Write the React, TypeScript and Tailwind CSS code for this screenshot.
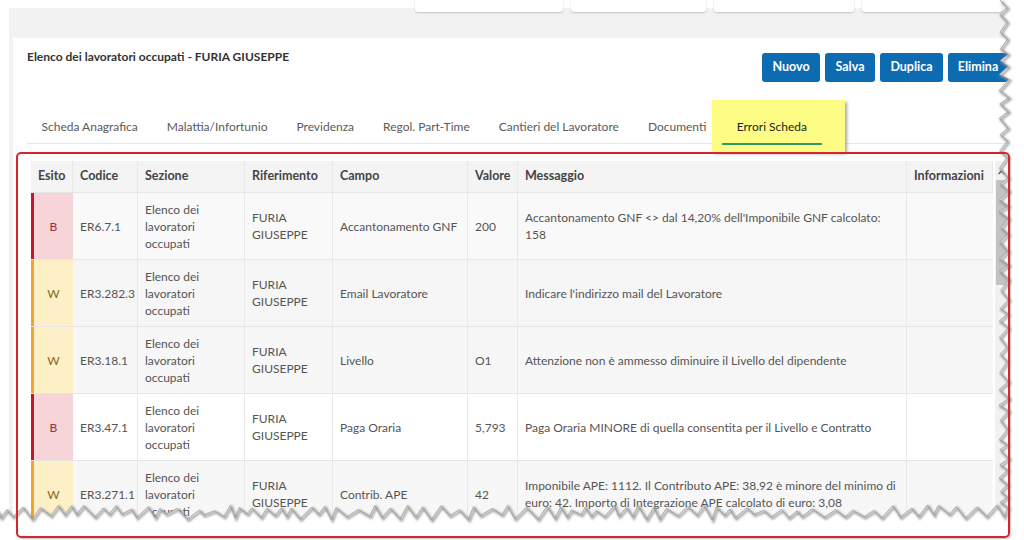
import React from "react";

type Row = {
    esito: "B" | "W";
    codice: string;
    campo: string;
    valore: string;
    messaggio: string;
    bg: string;
};

const rows: Row[] = [
    {
        esito: "B",
        codice: "ER6.7.1",
        campo: "Accantonamento GNF",
        valore: "200",
        messaggio: "Accantonamento GNF <> dal 14,20% dell'Imponibile GNF calcolato: 158",
        bg: "bg-[#f9f9f9]",
    },
    {
        esito: "W",
        codice: "ER3.282.3",
        campo: "Email Lavoratore",
        valore: "",
        messaggio: "Indicare l'indirizzo mail del Lavoratore",
        bg: "bg-[#f6f6f6]",
    },
    {
        esito: "W",
        codice: "ER3.18.1",
        campo: "Livello",
        valore: "O1",
        messaggio: "Attenzione non è ammesso diminuire il Livello del dipendente",
        bg: "bg-[#f7f7f7]",
    },
    {
        esito: "B",
        codice: "ER3.47.1",
        campo: "Paga Oraria",
        valore: "5,793",
        messaggio: "Paga Oraria MINORE di quella consentita per il Livello e Contratto",
        bg: "bg-white",
    },
    {
        esito: "W",
        codice: "ER3.271.1",
        campo: "Contrib. APE",
        valore: "42",
        messaggio:
            "Imponibile APE: 1112. Il Contributo APE: 38,92 è minore del minimo di euro: 42. Importo di Integrazione APE calcolato di euro: 3,08",
        bg: "bg-[#f7f7f7]",
    },
];

const tabs = [
    "Scheda Anagrafica",
    "Malattia/Infortunio",
    "Previdenza",
    "Regol. Part-Time",
    "Cantieri del Lavoratore",
    "Documenti",
];

const buttons = [
    { label: "Nuovo", w: "w-[58px]" },
    { label: "Salva", w: "w-[50px]" },
    { label: "Duplica", w: "w-[63px]" },
    { label: "Elimina", w: "w-[60px]" },
];

const cols = "grid grid-cols-[42px_65px_107px_88px_135px_50px_389px_86px]";
const cell = "border-r border-[#e9e9e9] px-[7px] flex items-center";

function rand(seed: number) {
    let s = seed;
    return () => {
        s = (s * 9301 + 49297) % 233280;
        return s / 233280;
    };
}

// torn paper edge on the right and at the bottom
function TornEdge() {
    const r = rand(7);
    const pts: [number, number][] = [];
    let y = 0;
    while (y < 508) {
        pts.push([999 + r() * 2, y]);
        y += 5 + r() * 5;
        pts.push([1007 + r() * 2, y]);
        y += 5 + r() * 6;
    }
    let x = 1004;
    while (x > 0) {
        pts.push([x, 514 + r() * 6]);
        x -= 4 + r() * 8;
        pts.push([x, 505 + r() * 6]);
        x -= 4 + r() * 8;
    }
    pts.push([0, 514]);
    const line = pts.map((p) => p.join(",")).join(" ");
    const fill = `1024,0 ${line} 0,540 1024,540`;
    return (
        <svg className="absolute inset-0 pointer-events-none" width="1024" height="540">
            <defs>
                <filter id="blur" x="-5%" y="-5%" width="110%" height="110%">
                    <feGaussianBlur stdDeviation="1.2" />
                </filter>
            </defs>
            <polygon points={fill} fill="#ffffff" />
            <polyline
                points={line}
                fill="none"
                stroke="#8a8a8a"
                strokeWidth="2.4"
                transform="translate(1.5,1.5)"
                filter="url(#blur)"
                opacity="0.8"
            />
            <polyline points={line} fill="none" stroke="#9a9a9a" strokeWidth="0.8" />
        </svg>
    );
}

export default function App() {
    return (
        <div className="relative w-[1024px] h-[540px] overflow-hidden bg-white font-['Lato','Liberation_Sans',sans-serif] text-[#555]">
            <div className="ml-[9px] h-[540px] bg-[linear-gradient(to_bottom,#ffffff_0,#ffffff_8px,#f2f2f2_8px)] flex flex-col">
                <div className="h-[38px] flex gap-[8px] pl-[406px]">
                    <div className="w-[148px] h-[12px] bg-white rounded-b-[3px] shadow-[0_1px_2px_rgba(0,0,0,0.2)]" />
                    <div className="w-[135px] h-[12px] bg-white rounded-b-[3px] shadow-[0_1px_2px_rgba(0,0,0,0.2)]" />
                    <div className="w-[140px] h-[12px] bg-white rounded-b-[3px] shadow-[0_1px_2px_rgba(0,0,0,0.2)]" />
                    <div className="w-[140px] h-[12px] bg-white rounded-b-[3px] shadow-[0_1px_2px_rgba(0,0,0,0.2)]" />
                </div>
                <div className="ml-[4px] flex-1 bg-white flex flex-col">
                    <div className="flex justify-between pl-[14px] pr-[16px] pt-[11px]">
                        <div className="text-[12px] font-bold text-[#333] leading-[16px]">
                            Elenco dei lavoratori occupati - FURIA GIUSEPPE
                        </div>
                        <div className="flex gap-[5px] mt-[4px]">
                            {buttons.map((b) => (
                                <button
                                    key={b.label}
                                    className={`${b.w} h-[29px] bg-[#0c6bb1] text-white text-[12.5px] font-bold rounded-[3px]`}
                                >
                                    {b.label}
                                </button>
                            ))}
                        </div>
                    </div>
                    <div className="mt-[28px] ml-[14px] flex border-b border-[#e6e6e6] h-[34px] text-[12px]">
                        {tabs.map((t) => (
                            <div key={t} className="px-[14.5px] flex items-center text-[#5a5a5a]">
                                {t}
                            </div>
                        ))}
                        <div className="relative ml-[1px] w-[100px] flex items-center justify-center">
                            <div className="absolute left-[-10px] right-[-23px] top-[-10px] bottom-[-9px] bg-[#fdfd86] shadow-[2px_2px_3px_rgba(0,0,0,0.35)]" />
                            <span className="relative text-[#222]">Errori Scheda</span>
                            <div className="absolute left-0 right-0 bottom-[-2px] h-[2px] bg-[#2f9a68]" />
                        </div>
                    </div>
                    <div className="mt-[17px] ml-[18px] flex gap-[2px] text-[12px]">
                        <div className="w-[962px]">
                            <div className={`${cols} h-[32px] bg-[#f4f4f4] border-b border-[#e6e6e6] font-bold text-[#444] text-[12.5px]`}>
                                {["Esito", "Codice", "Sezione", "Riferimento", "Campo", "Valore", "Messaggio", "Informazioni"].map(
                                    (h) => (
                                        <div key={h} className={cell}>
                                            {h}
                                        </div>
                                    ),
                                )}
                            </div>
                            {rows.map((r) => (
                                <div
                                    key={r.codice}
                                    className={`${cols} h-[67px] border-b border-[#e6e6e6] leading-[17px] ${r.bg}`}
                                >
                                    <div
                                        className={
                                            r.esito === "B"
                                                ? "flex items-center justify-center border-l-[3px] border-[#c5162e] bg-[#f6d4d8] text-[#9e2a35]"
                                                : "flex items-center justify-center border-l-[3px] border-[#efa52a] bg-[#fdf0c6] text-[#856a22]"
                                        }
                                    >
                                        {r.esito}
                                    </div>
                                    <div className={cell}>{r.codice}</div>
                                    <div className={cell}>Elenco dei lavoratori occupati</div>
                                    <div className={cell}>FURIA GIUSEPPE</div>
                                    <div className={cell}>{r.campo}</div>
                                    <div className={cell}>{r.valore}</div>
                                    <div className={cell}>{r.messaggio}</div>
                                    <div className="px-[7px]" />
                                </div>
                            ))}
                        </div>
                        <div className="w-[13px] bg-[#f1f1f1] flex flex-col items-center">
                            <svg width="9" height="14" viewBox="0 0 9 14" className="mt-[4px]">
                                <path d="M1.5 9 L4.5 6 L7.5 9" fill="none" stroke="#555" strokeWidth="1.3" />
                            </svg>
                            <div className="w-[11px] h-[105px] bg-[#c3c3c3] mt-[1px]" />
                        </div>
                    </div>
                </div>
            </div>
            <TornEdge />
            <div className="absolute left-[16px] top-[152px] w-[994px] h-[386px] border-2 border-[#d32630] rounded-[5px] shadow-[1px_1px_2px_rgba(0,0,0,0.25)] pointer-events-none" />
        </div>
    );
}
